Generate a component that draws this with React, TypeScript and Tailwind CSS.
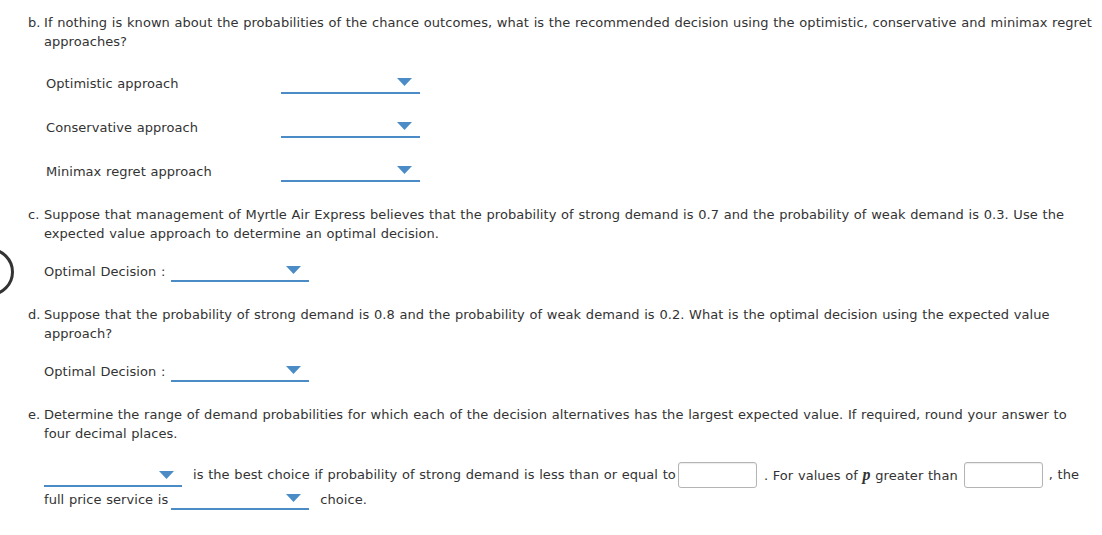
import React from 'react';

const Dropdown = ({ className = '' }: { className?: string }) => (
  <span
    className={`inline-flex h-[20px] justify-end items-start pt-[4px] pr-[8px] border-b-2 border-[#4b8bc6] ${className}`}
  >
    <svg width="15" height="8" viewBox="0 0 15 8" aria-hidden="true">
      <polygon points="0,0 15,0 7.5,8" fill="#4b8bc6" />
    </svg>
  </span>
);

const NumInput = () => (
  <span className="inline-block w-[79px] h-[26px] rounded-[3px] border border-[#b4b4b4] bg-white shadow-[inset_0_1px_1px_rgba(0,0,0,0.08)]" />
);

const Question = ({ label, children }: { label: string; children: React.ReactNode }) => (
  <div className="flex leading-[19px]">
    <span className="w-[16px] shrink-0">{label}</span>
    <p>{children}</p>
  </div>
);

export default function App() {
  return (
    <div
      className="relative w-[1102px] h-[535px] bg-white text-[#333] text-[13px] tracking-[0.05px] [word-spacing:0.5px] overflow-hidden"
      style={{ fontFamily: '"DejaVu Sans", Verdana, sans-serif' }}
    >
      {/* partial circle overlay at left edge */}
      <span className="absolute left-[-34px] top-[248px] w-[48px] h-[48px] rounded-full border-[3px] border-[#333]" />

      <div className="pl-[28px] pr-[8px] pt-[13px]">
        <Question label="b.">
          If nothing is known about the probabilities of the chance outcomes, what is the recommended decision using the optimistic, conservative and minimax regret approaches?
        </Question>

        <div className="mt-[11px] pl-[18px]">
          {['Optimistic approach', 'Conservative approach', 'Minimax regret approach'].map((t) => (
            <div key={t} className="flex items-center h-[44px]">
              <span className="w-[235px]">{t}</span>
              <Dropdown className="w-[139px]" />
            </div>
          ))}
        </div>

        <div className="mt-[11px]">
          <Question label="c.">
            Suppose that management of Myrtle Air Express believes that the probability of strong demand is 0.7 and the probability of weak demand is 0.3. Use the expected value approach to determine an optimal decision.
          </Question>
        </div>

        <div className="mt-[7px] pl-[16px] flex items-center h-[44px] gap-[6px]">
          <span>Optimal Decision :</span>
          <Dropdown className="w-[138px]" />
        </div>

        <div className="mt-[11px]">
          <Question label="d.">
            Suppose that the probability of strong demand is 0.8 and the probability of weak demand is 0.2. What is the optimal decision using the expected value approach?
          </Question>
        </div>

        <div className="mt-[7px] pl-[16px] flex items-center h-[44px] gap-[6px]">
          <span>Optimal Decision :</span>
          <Dropdown className="w-[138px]" />
        </div>

        <div className="mt-[11px]">
          <Question label="e.">
            Determine the range of demand probabilities for which each of the decision alternatives has the largest expected value. If required, round your answer to four decimal places.
          </Question>
        </div>

        <div className="mt-[19px] pl-[16px]">
          <div className="flex items-center h-[26px] whitespace-nowrap">
            <Dropdown className="w-[138px] mt-[4px]" />
            <span className="ml-[11px] mr-[2px]">is the best choice if probability of strong demand is less than or equal to</span>
            <NumInput />
            <span className="ml-[7px] mr-[6px]">
              . For values of{' '}
              <span className="italic font-bold text-[16px]" style={{ fontFamily: '"Liberation Serif", serif' }}>p</span>{' '}
              greater than
            </span>
            <NumInput />
            <span className="ml-[6px]">, the</span>
          </div>
          <div className="flex items-center h-[24px] whitespace-nowrap">
            <span>full price service is</span>
            <Dropdown className="w-[138px] ml-[3px]" />
            <span className="ml-[11px]">choice.</span>
          </div>
        </div>
      </div>
    </div>
  );
}
